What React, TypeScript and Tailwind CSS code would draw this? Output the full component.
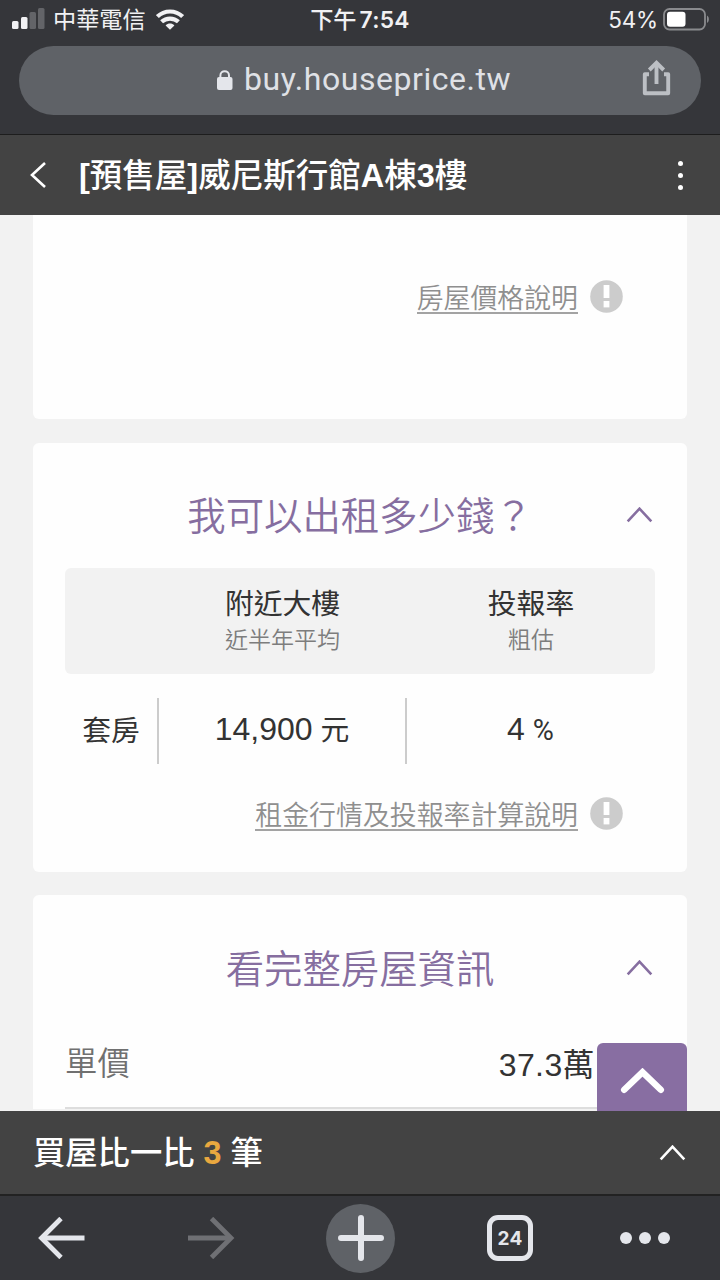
/**
 * House price page inside a mobile browser
 * Layout: browser chrome on top and bottom, scrolled page cards between
 */
import type { ReactNode } from "react";

const RENT_COLUMNS = [
  { title: "附近大樓", note: "近半年平均" },
  { title: "投報率", note: "粗估" },
];

function Chevron({
  className,
  width = 27,
  height = 16,
  stroke = 2.6,
  round = false,
}: {
  className?: string;
  width?: number;
  height?: number;
  stroke?: number;
  round?: boolean;
}) {
  const p = stroke * 0.65;
  return (
    <svg
      width={width}
      height={height}
      viewBox={`0 0 ${width} ${height}`}
      fill="none"
      stroke="currentColor"
      strokeWidth={stroke}
      strokeLinecap={round ? "round" : "butt"}
      className={className}
    >
      <path d={`M${p} ${height - p}L${width / 2} ${p}L${width - p} ${height - p}`} />
    </svg>
  );
}

function StatusBar() {
  return (
    <div className="relative flex h-[46px] items-center justify-between pr-[10px] pb-[7px] pl-3 text-[#f1f1f3]">
      <div className="flex items-center">
        <svg width="33" height="21" viewBox="0 0 33 21" fill="currentColor" className="mb-[2px]">
          <rect x="0" y="13" width="6.5" height="8" rx="1.5" />
          <rect x="9" y="9" width="6.5" height="12" rx="1.5" />
          <rect x="17.5" y="4" width="6.5" height="17" rx="1.5" fill="#636468" />
          <rect x="26" y="0" width="6.5" height="21" rx="1.5" fill="#636468" />
        </svg>
        <span className="ml-2 text-[23.2px] leading-[28px]">中華電信</span>
        <svg width="28" height="21" viewBox="0 0 28 21" className="ml-[10px]" fill="none" stroke="currentColor" strokeWidth="4.2">
          <path d="M1.4 7.6C8.4 0.8 19.6 0.8 26.6 7.6" />
          <path d="M5.6 12.8C10.2 8.5 17.8 8.5 22.4 12.8" />
          <path d="M9.6 16.4C12.2 13.8 15.8 13.8 18.4 16.4L14 20.8Z" fill="currentColor" stroke="none" />
        </svg>
      </div>
      {/* Clock sits in the true centre of the screen */}
      <div className="absolute inset-x-0 top-0 flex h-10 items-center justify-center font-medium">
        <span className="mt-px text-[23.2px]">下午</span>
        <span className="ml-[3px] font-['Inter'] text-[22.8px] font-semibold tracking-[0.3px]">7:54</span>
      </div>
      <div className="flex items-center">
        <span className="mt-px mr-[5px] font-['Inter'] text-[22.5px] tracking-[-0.2px]">54%</span>
        <svg width="47" height="23" viewBox="0 0 47 23" fill="none">
          <rect x="1" y="1" width="41" height="20.5" rx="5.5" stroke="#8a8b8e" strokeWidth="1.8" />
          <rect x="4" y="3.8" width="18.5" height="15" rx="3" fill="#fff" />
          <path d="M44 7.5C46.5 9 46.5 13.5 44 15Z" fill="#8a8b8e" />
        </svg>
      </div>
    </div>
  );
}

function AddressBar() {
  return (
    <div className="mx-[19px] flex h-[69px] items-center rounded-full bg-[#5f6267] pr-7 pl-[197px]">
      <svg width="18" height="20" viewBox="0 0 18 20" className="mb-[2px]">
        <rect x="1" y="7" width="15.5" height="13" rx="2" fill="#e4e6eb" />
        <path d="M4.4 8V5.4C4.4 0 13 0 13 5.4V8" fill="none" stroke="#e4e6eb" strokeWidth="2" />
      </svg>
      <span className="mb-[3px] ml-[10px] font-['Roboto'] text-[32px] leading-[40px] tracking-[0.55px] text-[#dfe1e6]">
        buy.houseprice.tw
      </span>
      <svg
        width="29"
        height="36"
        viewBox="0 0 29 36"
        fill="none"
        stroke="#bcbfc4"
        strokeWidth="3.9"
        className="mr-[2px] mb-[5px] ml-auto"
      >
        <path d="M7 14.2H2.8V33.2H26.2V14.2H22" strokeLinejoin="round" />
        <path d="M14.5 24V3.5" />
        <path d="M7.3 10L14.5 2.8L21.7 10" />
      </svg>
    </div>
  );
}

function PageHeader() {
  return (
    <header className="flex h-[81px] shrink-0 items-center border-t border-[#1d1d1d] bg-[#434343] text-white">
      <svg width="16" height="26" viewBox="0 0 16 26" fill="none" stroke="currentColor" strokeWidth="2.6" className="ml-[30px]">
        <path d="M15 1L2 13L15 25" />
      </svg>
      <h1 className="mt-[2px] ml-[33px] text-[32.5px] leading-[48px] font-medium">
        <b>[</b>預售屋<b>]</b>威尼斯行館<b>A</b>棟<b>3</b>樓
      </h1>
      <div className="mr-[37px] ml-auto flex flex-col gap-[7px]">
        <span className="size-[5px] rounded-full bg-white" />
        <span className="size-[5px] rounded-full bg-white" />
        <span className="size-[5px] rounded-full bg-white" />
      </div>
    </header>
  );
}

function NoteLink({ children }: { children: ReactNode }) {
  return (
    <div className="flex h-9 items-center justify-end pr-16">
      <a className="mt-[1px] border-b-2 border-[#a3a3a3] pt-[3px] text-[26.9px] leading-[25px] font-[350] text-[#8f8f8f]">{children}</a>
      <svg width="33" height="33" viewBox="0 0 33 33" className="mb-1 ml-3">
        <circle cx="16.5" cy="16.5" r="16.3" fill="#ccc" />
        <rect x="13.6" y="5" width="5.8" height="13" fill="#fff" />
        <rect x="13.6" y="21" width="5.8" height="6.4" fill="#fff" />
      </svg>
    </div>
  );
}

function CardTitle({ children }: { children: string }) {
  return (
    <div className="relative flex h-[60px] items-center justify-center text-[#866ea0]">
      <h2 className="pt-1 text-[38.4px] leading-[60px] font-[350]">{children}</h2>
      <Chevron className="absolute top-[22px] right-[34px]" />
    </div>
  );
}

function RentCard() {
  return (
    <section className="mt-6 h-[429px] rounded-md bg-[#fefefe] pt-[42px]">
      <CardTitle>我可以出租多少錢？</CardTitle>
      <div className="mx-8 mt-[23px] grid h-[106px] grid-cols-[94px_247px_250px] rounded-md bg-[#f2f2f2] text-center">
        <span />
        {RENT_COLUMNS.map((col) => (
          <div key={col.title} className="pt-[16px]">
            <p className="text-[28.8px] leading-[40px] text-[#333]">{col.title}</p>
            <p className="text-[23px] leading-[32px] font-[350] text-[#7d7d7d]">{col.note}</p>
          </div>
        ))}
      </div>
      <div className="mx-8 mt-6 grid h-[64px] grid-cols-[94px_248px_249px] items-center text-center text-[28.8px] text-[#333]">
        <div className="h-full border-r-2 border-[#ccc] leading-[66px]">套房</div>
        <div className="h-full border-r-2 border-[#ccc] leading-[62px]">
          <span className="text-[32px]">14,900</span> 元
        </div>
        <div className="h-full pr-[2px] leading-[62px]">
          <span className="text-[32px]">4</span> <span className="font-['Roboto']">%</span>
        </div>
      </div>
      <div className="mt-[35px]">
        <NoteLink>租金行情及投報率計算說明</NoteLink>
      </div>
    </section>
  );
}

function InfoCard() {
  return (
    <section className="mt-[23px] rounded-t-md bg-[#fefefe] pt-[43px]">
      <CardTitle>看完整房屋資訊</CardTitle>
      <div className="mx-8 mt-[31px] flex h-[80px] items-center justify-between border-b-2 border-[#ddd] pr-[60px] pb-[5px] text-[32px]">
        <span className="pb-[2px] text-[32.4px] font-[350] text-[#707070]">單價</span>
        <span className="pb-px tracking-[0.4px] text-[#333]">37.3萬</span>
      </div>
    </section>
  );
}

function BrowserToolbar() {
  return (
    <nav className="flex h-[86px] shrink-0 items-center border-t-2 border-[#222] bg-[#35363a] text-[#e4e6eb]">
      <svg width="48" height="42" viewBox="0 0 48 42" fill="none" stroke="currentColor" strokeWidth="4.8" className="mb-px ml-[38px]">
        <path d="M46.5 21H4" />
        <path d="M23 1.5L3.5 21L23 40.5" />
      </svg>
      <svg width="48" height="42" viewBox="0 0 48 42" fill="none" stroke="#6f7074" strokeWidth="4.8" className="mb-px ml-[101px]">
        <path d="M1 21H44" />
        <path d="M24.5 1.5L44 21L24.5 40.5" />
      </svg>
      <div className="ml-[91px] flex size-[69px] items-center justify-center rounded-full bg-[#5f6267]">
        <svg width="46" height="46" viewBox="0 0 46 46" stroke="currentColor" strokeWidth="6" strokeLinecap="round">
          <path d="M23 3V43M3 23H43" />
        </svg>
      </div>
      <div className="ml-[92px] flex size-[46px] items-center justify-center rounded-[11px] border-[5px] border-current pt-[2px] font-['Inter'] text-[19px] font-bold tracking-[0.3px]">
        24
      </div>
      <div className="ml-[87px] flex gap-[7px]">
        <span className="size-3 rounded-full bg-current" />
        <span className="size-3 rounded-full bg-current" />
        <span className="size-3 rounded-full bg-current" />
      </div>
    </nav>
  );
}

export default function App() {
  return (
    <div className="flex h-[1280px] w-[720px] flex-col overflow-hidden bg-[#f2f2f2] font-['Liberation_Sans','Noto_Sans_CJK_TC',sans-serif]">
      <div className="h-[134px] shrink-0 bg-[#35363a]">
        <StatusBar />
        <AddressBar />
      </div>
      <PageHeader />
      <main className="relative h-[896px] shrink-0 overflow-hidden px-[33px]">
        {/* Tail of the price card that is scrolled off */}
        <section className="h-[204px] rounded-b-md bg-[#fefefe] pt-[65px]">
          <NoteLink>房屋價格說明</NoteLink>
        </section>
        <RentCard />
        <InfoCard />
        {/* Back to top */}
        <button className="absolute right-[33px] bottom-0 flex h-[68px] w-[90px] justify-center rounded-t-md bg-[#886ea2] pt-[25px] text-white">
          <Chevron width={45} height={26} stroke={6.5} round />
        </button>
      </main>
      <div className="flex h-[83px] shrink-0 items-center justify-between bg-[#434343] pr-[34px] pl-[33px] text-white">
        <p className="text-[32.3px] leading-[48px] font-medium">
          買屋比一比 <span className="font-bold text-[#e9a83f]">3</span> 筆
        </p>
        <Chevron />
      </div>
      <BrowserToolbar />
    </div>
  );
}
